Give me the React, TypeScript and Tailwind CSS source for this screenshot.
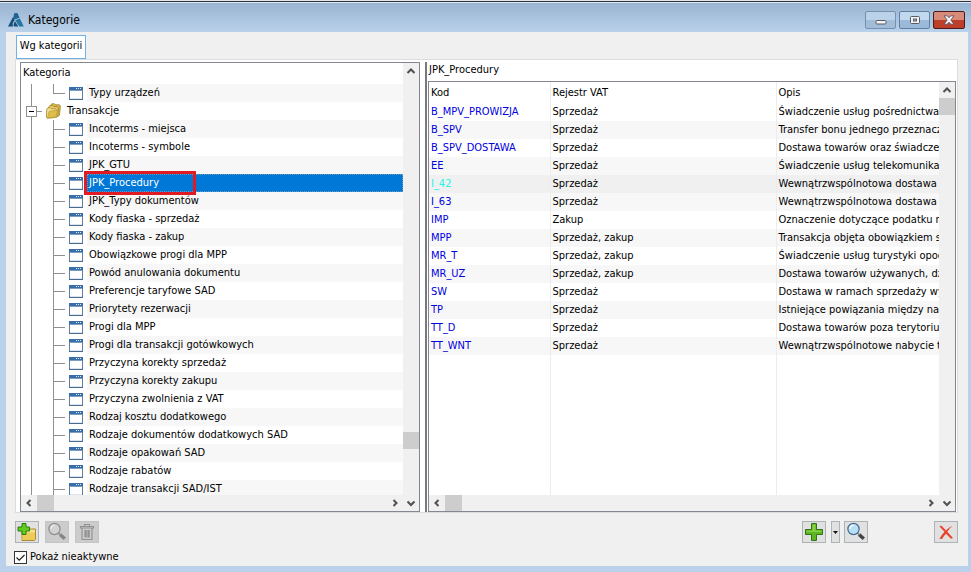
import type { ReactNode } from 'react'

const treeItems = [
  'Incoterms - miejsca',
  'Incoterms - symbole',
  'JPK_GTU',
  'JPK_Procedury',
  'JPK_Typy dokumentów',
  'Kody fiaska - sprzedaż',
  'Kody fiaska - zakup',
  'Obowiązkowe progi dla MPP',
  'Powód anulowania dokumentu',
  'Preferencje taryfowe SAD',
  'Priorytety rezerwacji',
  'Progi dla MPP',
  'Progi dla transakcji gotówkowych',
  'Przyczyna korekty sprzedaż',
  'Przyczyna korekty zakupu',
  'Przyczyna zwolnienia z VAT',
  'Rodzaj kosztu dodatkowego',
  'Rodzaje dokumentów dodatkowych SAD',
  'Rodzaje opakowań SAD',
  'Rodzaje rabatów',
  'Rodzaje transakcji SAD/IST',
]

const procedures = [
  ['B_MPV_PROWIZJA', 'Sprzedaż', 'Świadczenie usług pośrednictwa o'],
  ['B_SPV', 'Sprzedaż', 'Transfer bonu jednego przeznacz'],
  ['B_SPV_DOSTAWA', 'Sprzedaż', 'Dostawa towarów oraz świadczen'],
  ['EE', 'Sprzedaż', 'Świadczenie usług telekomunikacy'],
  ['I_42', 'Sprzedaż', 'Wewnątrzwspólnotowa dostawa'],
  ['I_63', 'Sprzedaż', 'Wewnątrzwspólnotowa dostawa'],
  ['IMP', 'Zakup', 'Oznaczenie dotyczące podatku n'],
  ['MPP', 'Sprzedaż, zakup', 'Transakcja objęta obowiązkiem st'],
  ['MR_T', 'Sprzedaż, zakup', 'Świadczenie usług turystyki opod'],
  ['MR_UZ', 'Sprzedaż, zakup', 'Dostawa towarów używanych, dz'],
  ['SW', 'Sprzedaż', 'Dostawa w ramach sprzedaży wy'],
  ['TP', 'Sprzedaż', 'Istniejące powiązania między nab'],
  ['TT_D', 'Sprzedaż', 'Dostawa towarów poza terytoriu'],
  ['TT_WNT', 'Sprzedaż', 'Wewnątrzwspólnotowe nabycie t'],
]

const arrows = {
  up: 'M4.500 10 L8 6.500 L11.500 10',
  down: 'M4.500 6.500 L8 10 L11.500 6.500',
  left: 'M9.500 5 L6.500 8 L9.500 11',
  right: 'M6.500 5 L9.500 8 L6.500 11',
}

function ScrollButton({ dir, label }: { dir: keyof typeof arrows; label: string }) {
  return (
    <button aria-label={label} className="h-4 w-4 shrink-0">
      <svg viewBox="0 0 16 16" className="h-4 w-4" fill="none" stroke="#505050" strokeWidth="2">
        <path d={arrows[dir]} />
      </svg>
    </button>
  )
}

function WindowIcon() {
  return (
    <svg viewBox="0 0 14 13" className="h-[13px] w-3.5 shrink-0">
      <rect x="0.5" y="0.5" width="13" height="12" fill="#fff" stroke="#5f7f9f" />
      <path d="M1 11.500h12" stroke="#dbe6f1" />
      <rect width="14" height="3" fill="#3a6ea8" />
      <path d="M7 1.500h1M9 1.500h1M11 1.500h1" stroke="#e3edf6" />
      <path d="M1 3.500h12" stroke="#7d9fc2" />
      <path d="M0 12.500h14" stroke="#4a6c93" />
    </svg>
  )
}

function FolderIcon() {
  return (
    <svg viewBox="0 0 15 16" className="h-4 w-[15px] shrink-0">
      <path d="M4.500 5V2.200L6 .8h2.500l1 1h3.700l1.200 1L13.500 12l-2 2z" fill="#d9b84e" stroke="#9c7d22" strokeWidth=".8" />
      <path d="M2.500 6V4L4 2.600h2.800l1 1h3.600l1 1-.6 8.500-1.800 1.500z" fill="#e8cd6c" stroke="#9c7d22" strokeWidth=".8" />
      <path d="m.7 6.200 1.200-1.400h2.600l1 1h4l.8 1-1 7.700-8 .8-.8-1z" fill="#f6e28c" stroke="#a08327" strokeWidth=".8" />
      <path d="m1.500 14.700 1.700-6.500 8.600-1-2 7z" fill="#dfbd4a" stroke="#a88a2d" strokeWidth=".5" />
    </svg>
  )
}

function Magnifier({ gray = false }: { gray?: boolean }) {
  return (
    <svg viewBox="0 0 20 20" className="h-5 w-5">
      <path d="m13 12.500 4.800 4.300" stroke={gray ? '#858585' : '#3e4348'} strokeWidth="3.400" />
      <path d="m11 10.500 2.500 2.300" stroke={gray ? '#999' : '#8b949c'} strokeWidth="1.800" />
      <circle cx="7.500" cy="7" r="5.600" fill={gray ? '#d2d2d2' : '#b9dff7'} stroke={gray ? '#8d8d8d' : '#44698c'} strokeWidth="1.200" />
      <path d="M3.800 7a3.800 3.800 0 0 1 3.800-3.600" fill="none" stroke={gray ? '#e8e8e8' : '#eff9ff'} strokeWidth="1.500" />
    </svg>
  )
}

function ToolButton({ label, disabled, className = 'w-6', children }: { label: string; disabled?: boolean; className?: string; children: ReactNode }) {
  return (
    <button
      aria-label={label}
      disabled={disabled}
      className={`flex h-[22px] shrink-0 items-center justify-center border border-[#adb2b5] bg-[#e1e1e1] disabled:border-[#c4c4c4] disabled:bg-[#cccccc] ${className}`}
    >
      {children}
    </button>
  )
}

function TitleBar() {
  return (
    <header className="flex h-[29px] shrink-0 items-center bg-linear-to-b from-[#99b4d1] to-[#b9d1ea] pr-1.5 pl-2 pt-1">
      <svg viewBox="0 0 16 14" className="h-3.5 w-4">
        <path d="M6.500 0h3l2 4.800-5 1.700L5.500 3z" fill="#1f6592" />
        <path d="M5.300 3.500 6.600 7 4.600 10.500 5 13.500H0z" fill="#174f78" />
        <path d="m7.300 7.200 4.500-1.700 4 8h-4.500z" fill="#2476a3" />
        <path d="m5.600 11 1.400-2.700 3.400 5.200H5.800z" fill="#174f78" />
      </svg>
      <h1 className="ml-1 flex-1 text-[12px] leading-4">Kategorie</h1>
      <div className="flex gap-[3px]">
        <button aria-label="Minimalizuj" className="flex h-[18px] w-[31px] items-center justify-center rounded-xs border border-[#7591b0] bg-linear-to-b from-[#bcd2e8] from-50% to-[#a3bdd8] to-50%">
          <svg viewBox="0 0 12 10" className="h-2.5 w-3">
            <rect x="1" y="5.500" width="10" height="3.500" rx="1" fill="#f4f4f4" stroke="#565d66" />
          </svg>
        </button>
        <button aria-label="Maksymalizuj" className="flex h-[18px] w-[31px] items-center justify-center rounded-xs border border-[#5f7fa3] bg-linear-to-b from-[#c2d8ee] from-50% to-[#9bb9d8] to-50%">
          <svg viewBox="0 0 12 10" className="h-2.5 w-3">
            <rect x="1.500" y="1.500" width="9" height="7" rx="1" fill="#f4f4f4" stroke="#565d66" />
            <rect x="4.500" y="4" width="3" height="2" fill="#a8bfd8" stroke="#565d66" />
          </svg>
        </button>
        <button aria-label="Zamknij" className="flex h-[18px] w-8 items-center justify-center rounded-xs border border-[#4d1a1c] bg-linear-to-b from-[#d98b79] from-50% to-[#bd3f29] to-50%">
          <svg viewBox="0 0 12 10" className="h-2.5 w-3">
            <path d="M1 .8h3.200L6 2.800 7.800.8H11L7.800 5 11 9.200H7.800L6 7.200 4.200 9.200H1L4.200 5z" fill="#f6f6f6" stroke="#5b5560" strokeWidth=".9" />
          </svg>
        </button>
      </div>
    </header>
  )
}

function TreeChild({ label, last, striped, selected }: { label: string; last?: boolean; striped: boolean; selected?: boolean }) {
  return (
    <li className="flex h-[18px] shrink-0 items-center">
      <span className="ml-2.5 h-full w-[22px] shrink-0 border-l border-[#8f8f8f]" />
      <span className={`w-px shrink-0 bg-[#8f8f8f] ${last ? 'h-2.5 self-start' : 'h-full'}`} />
      <span className="h-px w-[11px] shrink-0 bg-[#8f8f8f]" />
      <span className="ml-1 flex w-[18px] shrink-0">
        <WindowIcon />
      </span>
      <span
        className={`relative h-full flex-1 pl-0.5 leading-[18px] ${
          selected ? 'bg-[#0078d7] text-white outline outline-dotted -outline-offset-1 outline-[#6f97b8]' : striped ? 'bg-[#f7f7f7]' : ''
        }`}
      >
        {label}
        {selected && <span className="absolute -top-[3px] -left-[3px] z-10 h-6 w-28 border-3 border-[#e01b24]" />}
      </span>
    </li>
  )
}

function CategoryTree() {
  return (
    <section className="flex w-[400px] shrink-0 border border-[#828790] bg-white">
      <div className="flex min-w-0 flex-1 flex-col">
        <h2 className="h-[21px] shrink-0 pl-0.5 leading-5">Kategoria</h2>
        <ul className="flex min-h-0 flex-1 flex-col overflow-hidden">
          <TreeChild label="Typy urządzeń" last striped />
          <li className="flex h-[18px] shrink-0 items-center">
            <span className="relative ml-2.5 flex h-full w-[11px] items-center border-l border-[#8f8f8f]">
              <span className="h-px w-full bg-[#8f8f8f]" />
              <button aria-label="Zwiń Transakcje" className="absolute -left-1.5 flex h-[11px] w-[11px] items-center justify-center border border-[#8f8f8f] bg-white">
                <span className="h-px w-[5px] bg-black" />
              </button>
            </span>
            <span className="ml-1 flex w-[21px]">
              <FolderIcon />
            </span>
            <span className="leading-[18px]">Transakcje</span>
          </li>
          {treeItems.map((item, i) => (
            <TreeChild key={item} label={item} striped={i % 2 === 0} selected={item === 'JPK_Procedury'} />
          ))}
        </ul>
        <div className="flex h-4 shrink-0 bg-[#f0f0f0]">
          <ScrollButton dir="left" label="Przewiń w lewo" />
          <span className="h-full w-[17px] bg-[#cdcdcd]" />
          <span className="flex-1" />
          <ScrollButton dir="right" label="Przewiń w prawo" />
        </div>
      </div>
      <div className="flex w-4 shrink-0 flex-col bg-[#f0f0f0]">
        <ScrollButton dir="up" label="Przewiń w górę" />
        <span className="flex-1" />
        <span className="h-[17px] w-full bg-[#cdcdcd]" />
        <span className="h-[46px]" />
        <ScrollButton dir="down" label="Przewiń w dół" />
      </div>
    </section>
  )
}

function ProcedureTable() {
  return (
    <section className="flex min-w-0 flex-1 flex-col border-l-2 border-[#76797f] bg-white">
      <h2 className="h-[19px] shrink-0 pl-0.5 leading-4">JPK_Procedury</h2>
      <div className="ml-px flex min-h-0 flex-1 border border-[#828790]">
        <div className="flex min-w-0 flex-1 flex-col">
          <div className="min-h-0 flex-1 overflow-hidden">
            <table className="h-full w-full table-fixed border-collapse text-left">
              <thead>
                <tr className="h-[21px]">
                  <th className="w-[121px] border-r border-[#ececec] p-0 pl-0.5 font-normal">Kod</th>
                  <th className="w-[226px] border-r border-[#ececec] p-0 pl-0.5 font-normal">Rejestr VAT</th>
                  <th className="p-0 pl-0.5 font-normal">Opis</th>
                </tr>
              </thead>
              <tbody>
                {procedures.map(([code, register, description], i) => (
                  <tr key={code} className={`h-[18px] leading-[18px] ${code === 'I_42' ? 'bg-[#f0f0f0]' : i % 2 ? 'bg-[#f7f7f7]' : ''}`}>
                    <td className={`border-r border-[#ececec] p-0 pl-0.5 ${code === 'I_42' ? 'text-[#22f5e6]' : 'text-[#0000e0]'}`}>{code}</td>
                    <td className="border-r border-[#ececec] p-0 pl-0.5">{register}</td>
                    <td className="overflow-hidden p-0 pl-0.5 whitespace-nowrap">{description}</td>
                  </tr>
                ))}
                <tr aria-hidden="true">
                  <td className="border-r border-[#ececec] p-0" />
                  <td className="border-r border-[#ececec] p-0" />
                  <td className="p-0" />
                </tr>
              </tbody>
            </table>
          </div>
          <div className="flex h-4 shrink-0 bg-[#f0f0f0]">
            <ScrollButton dir="left" label="Przewiń w lewo" />
            <span className="h-full w-[17px] bg-[#cdcdcd]" />
            <span className="flex-1" />
            <ScrollButton dir="right" label="Przewiń w prawo" />
          </div>
        </div>
        <div className="flex w-4 shrink-0 flex-col bg-[#f0f0f0]">
          <ScrollButton dir="up" label="Przewiń w górę" />
          <span className="h-[17px] w-full bg-[#cdcdcd]" />
          <span className="flex-1" />
          <ScrollButton dir="down" label="Przewiń w dół" />
        </div>
      </div>
    </section>
  )
}

function Toolbar() {
  return (
    <div className="flex items-center pt-2">
      <div className="flex gap-1.5">
        <ToolButton label="Dodaj kategorię">
          <svg viewBox="0 0 20 20" className="h-5 w-5">
            <path d="M5 8.500h7l1.200-1.500h5.300v10.500L17.500 18.500H5z" fill="#f5e08f" stroke="#a98a2c" />
            <path d="M5.500 10.500h12.500V18H5.500z" fill="#eccb58" />
            <path d="M5 1.500h4v3.500h3.500v4H9v3.500H5V9H1V5h4z" fill="#62cc1e" stroke="#2d7a12" />
          </svg>
        </ToolButton>
        <ToolButton label="Pokaż kategorię" disabled>
          <Magnifier gray />
        </ToolButton>
        <ToolButton label="Usuń kategorię" disabled>
          <svg viewBox="0 0 20 20" className="h-5 w-5" fill="none" stroke="#929292" strokeWidth="1.200">
            <path d="M3.500 4.500h13v1.500h-13zM7.500 4.500V2.500h5v2M5 6v11.500h10V6" />
            <path d="M8 8.500v6.500h1.200V8.500zM11 8.500v6.500h1.200V8.500z" />
          </svg>
        </ToolButton>
      </div>
      <div className="ml-auto flex gap-1">
        <ToolButton label="Dodaj" className="mr-px w-6">
          <svg viewBox="0 0 20 20" className="h-5 w-5">
            <path d="M7.500 1.500h5v6h6v5h-6v6h-5v-6h-6v-5h6z" fill="#5db521" stroke="#2f7414" />
            <path d="M8.500 2.500h3v6h6V10h-15V8.500h6z" fill="#86d142" />
          </svg>
        </ToolButton>
        <ToolButton label="Więcej opcji dodawania" className="w-[9px]">
          <svg viewBox="0 0 5 3" className="h-[3px] w-[5px] shrink-0">
            <path d="M0 0h5L2.500 3z" fill="#111" />
          </svg>
        </ToolButton>
        <ToolButton label="Pokaż">
          <Magnifier />
        </ToolButton>
      </div>
      <ToolButton label="Zamknij okno" className="ml-[66px] w-6">
        <svg viewBox="0 0 20 20" className="h-5 w-5">
          <path d="M3.500 4.500C4 3.500 5.500 3.500 6.300 4.500l3.700 4C12 6.500 14 4.800 16.500 3.800c-2 1.700-3.700 3.700-5.200 6L17 16l-2 .8-5-5C8.500 13.500 7 15.300 6 17l-2.500-.3c1-2 3-4.700 5-7z" fill="#e8432a" />
        </svg>
      </ToolButton>
    </div>
  )
}

export default function App() {
  return (
    <div className="flex h-screen flex-col overflow-hidden border-t border-[#e6e6e6] bg-[#b9d1ea] font-['DejaVu_Sans_Condensed','DejaVu_Sans',sans-serif] text-[11px] leading-4 text-black">
      <div className="h-0.5 shrink-0 border-t border-[#2b3440] bg-[#dfe9f3]" />
      <TitleBar />
      <main className="mr-[3px] mb-1.5 ml-1.5 flex min-h-0 flex-1 flex-col bg-[#f0f0f0] pt-[3px] pr-2.5 pb-px pl-[9px]">
        <div role="tablist" className="ml-px flex">
          <button role="tab" aria-selected="true" className="h-6 w-[70px] border border-[#6fb1e4] bg-white pb-0.5 text-center whitespace-nowrap">
            Wg kategorii
          </button>
        </div>
        <div className="flex min-h-0 flex-1 border border-[#dcdcdc] bg-white pt-0.5 pr-px pl-1">
          <CategoryTree />
          <div className="w-[5px] shrink-0 bg-white" />
          <ProcedureTable />
        </div>
        <Toolbar />
        <label className="mt-1.5 -ml-px flex h-4 items-center gap-[3px]">
          <input
            type="checkbox"
            defaultChecked
            className="peer h-[13px] w-[13px] appearance-none border border-[#333] bg-white"
          />
          <svg viewBox="0 0 13 13" className="-ml-4 hidden h-[13px] w-[13px] peer-checked:block" fill="none" stroke="#222" strokeWidth="1.200">
            <path d="m2.500 6.500 2.700 2.700L10.500 4" />
          </svg>
          Pokaż nieaktywne
        </label>
      </main>
    </div>
  )
}
